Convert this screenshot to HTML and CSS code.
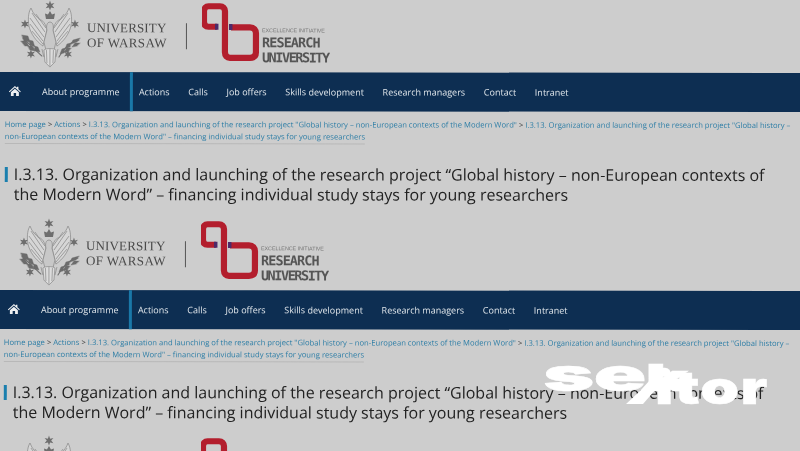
FILE: index.html
```html
<!DOCTYPE html>
<html lang="en">
<head>
<meta charset="utf-8">
<title>I.3.13. Organization and launching of the research project</title>
<link rel="stylesheet" href="styles.css">
</head>
<body>
<svg class="defs" aria-hidden="true">
  <symbol id="star" viewBox="0 0 10 10">
    <path d="M5 0.5 6 3.3 9 2.6 7 5 9 7.4 6 6.7 5 9.5 4 6.7 1 7.4 3 5 1 2.6 4 3.3Z"/>
  </symbol>
  <symbol id="eagle" viewBox="0 0 64 68">
    <g fill="#d6d6d6" stroke="#858585" stroke-width=".7">
      <path d="M11 8C8 13 8 20 9 26 11 34 16 41 23 46L27 30C26 24 22 19 20 20 17 17 13 14 11 8Z"/>
      <path d="M49 8C52 13 52 20 51 26 49 34 44 41 37 46L33 30C34 24 38 19 40 20 43 17 47 14 49 8Z"/>
      <path d="M12 13 25 32M10 18 24 37M10 24 23 41M12 31 23 44M16 14 26 28M48 13 35 32M50 18 36 37M50 24 37 41M48 31 37 44M44 14 34 28" fill="none" stroke="#8e8e8e" stroke-width=".8"/>
      <path d="M27 30C26 26 27 22 30 22 33 22 34 26 33 30L36 42 34 50 26 50 24 42Z" fill="#c8c8c8"/>
      <path d="M24 50C26 48 34 48 36 50L35 62 30 67 25 62Z" fill="#dcdcdc"/>
      <path d="M26.500 50 27 63M30 49V66M33.500 50 33 63M22 49 24 57M38 49 36 57" fill="none" stroke-width=".7"/>
    </g>
    <g fill="#6e6e6e">
      <use href="#star" x="24.500" y="0" width="11" height="11"/>
      <use href="#star" x="0" y="19" width="10" height="10"/>
      <use href="#star" x="50" y="19" width="10" height="10"/>
      <use href="#star" x="6" y="49" width="10" height="10"/>
      <use href="#star" x="43" y="49" width="10" height="10"/>
      <path d="M26 19 25 13.500 28 14.500 30 11 32 14.500 35 13.500 34 19Z"/>
    </g>
    <g fill="#6c6c6c" stroke="#6c6c6c" stroke-linecap="round">
      <path d="M3 38 22 56" fill="none" stroke-width="1"/>
      <path d="M59 40C50 42 44 48 39 57" fill="none" stroke-width="1"/>
      <path d="M2 35 8 36 10 42 4 41ZM1 41 6 41 9 46 5 46ZM9 40 13 41 15 47 10 45ZM8 46 12 46 15 51 10 50ZM15 46 18 47 20 52 15 51Z" stroke-width=".4"/>
      <path d="M60 38 53 40 51 44 57 42ZM60 43 55 43 52 47 57 46ZM51 43 47 44 45 49 50 47ZM51 48 47 48 44 52 48 52ZM45 48 42 49 40 54 44 53Z" stroke-width=".4"/>
    </g>
  </symbol>
  <symbol id="mark" viewBox="0 0 60 62">
    <path d="M15 26.500H6.500C3.500 26.500 2 24.500 2 21.500V11C2 8 4 6 6.500 6H18C21 6 23 8 23 11V52C23 55.500 25 57.500 28 57.500H48C52 57.500 54 55.500 54 52V33C54 29.500 52 27 48 27H29" fill="none" stroke="#b31e2d" stroke-width="6.200"/>
    <path d="M13 23.500h3.500v6H13zM27 23.800h3.500v6H27z" fill="#4d2a6a"/>
  </symbol>
</svg>

<main class="page">
  <section class="shot">
    <header class="brand">
      <svg class="eagle"><use href="#eagle"/></svg>
      <div class="uw"><span>UNIVERSITY</span><span class="uw-b">OF WARSAW</span></div>
      <i class="rule"></i>
      <svg class="mark"><use href="#mark"/></svg>
      <div class="idub"><small>EXCELLENCE INITIATIVE</small><b>RESEARCH</b><b>UNIVERSITY</b></div>
    </header>
    <nav class="nav">
      <svg class="home" viewBox="0 0 12 10"><path d="M6 0 8 1.800V.7h1.500v2.500L12 5.400l-.7.8L6 1.600.7 6.200 0 5.400ZM2 6.200 6 2.800l4 3.400V10H7.200V7H4.800v3H2Z"/></svg>
      <a class="item active">About programme</a>
      <a class="item">Actions</a>
      <a class="item">Calls</a>
      <a class="item">Job offers</a>
      <a class="item">Skills development</a>
      <a class="item">Research managers</a>
      <a class="item">Contact</a>
      <a class="item">Intranet</a>
    </nav>
    <p class="crumbs"><a>Home page</a> <em>&gt;</em> <a>Actions</a> <em>&gt;</em> <a>I.3.13. Organization and launching of the research project "Global history – non-European contexts of the Modern Word"</a> <em>&gt;</em> <a>I.3.13. Organization and launching of the research project "Global history – non-European contexts of the Modern Word" – financing individual study stays for young researchers</a></p>
    <h1 class="title">I.3.13. Organization and launching of the research project “Global history – non-European contexts of the Modern Word” – financing individual study stays for young researchers</h1>
  </section>

  <section class="shot">
    <header class="brand">
      <svg class="eagle"><use href="#eagle"/></svg>
      <div class="uw"><span>UNIVERSITY</span><span class="uw-b">OF WARSAW</span></div>
      <i class="rule"></i>
      <svg class="mark"><use href="#mark"/></svg>
      <div class="idub"><small>EXCELLENCE INITIATIVE</small><b>RESEARCH</b><b>UNIVERSITY</b></div>
    </header>
    <nav class="nav">
      <svg class="home" viewBox="0 0 12 10"><path d="M6 0 8 1.800V.7h1.500v2.500L12 5.400l-.7.8L6 1.600.7 6.200 0 5.400ZM2 6.200 6 2.800l4 3.400V10H7.200V7H4.800v3H2Z"/></svg>
      <a class="item active">About programme</a>
      <a class="item">Actions</a>
      <a class="item">Calls</a>
      <a class="item">Job offers</a>
      <a class="item">Skills development</a>
      <a class="item">Research managers</a>
      <a class="item">Contact</a>
      <a class="item">Intranet</a>
    </nav>
    <p class="crumbs"><a>Home page</a> <em>&gt;</em> <a>Actions</a> <em>&gt;</em> <a>I.3.13. Organization and launching of the research project "Global history – non-European contexts of the Modern Word"</a> <em>&gt;</em> <a>I.3.13. Organization and launching of the research project "Global history – non-European contexts of the Modern Word" – financing individual study stays for young researchers</a></p>
    <h1 class="title">I.3.13. Organization and launching of the research project “Global history – non-European contexts of the Modern Word” – financing individual study stays for young researchers</h1>
  </section>

  <section class="shot">
    <header class="brand">
      <svg class="eagle"><use href="#eagle"/></svg>
      <div class="uw"><span>UNIVERSITY</span><span class="uw-b">OF WARSAW</span></div>
      <i class="rule"></i>
      <svg class="mark"><use href="#mark"/></svg>
      <div class="idub"><small>EXCELLENCE INITIATIVE</small><b>RESEARCH</b><b>UNIVERSITY</b></div>
    </header>
  </section>
</main>

<div class="mask">
  <span class="wm wm-a">se<span class="wm-k">k</span></span>
  <span class="wm wm-b">itor</span>
  <svg class="wm-x" viewBox="0 0 40 24"><path d="M24 0H38L17 24H0L14 11Z"/></svg>
</div>
</body>
</html>
```

FILE: styles.css
```css
* { box-sizing: border-box; }

html, body {
  margin: 0;
  width: 800px;
  height: 451px;
  overflow: hidden;
  background: #cdcdcd;
}

.defs {
  position: absolute;
  width: 0;
  height: 0;
}

.page {
  width: 800px;
  height: 451px;
  overflow: hidden;
  filter: blur(.45px);
  font-family: "Open Sans", "Noto Sans", sans-serif;
}

.shot {
  width: 803px;
  height: 217.5px;
  transform: rotate(.07deg);
  transform-origin: 0 0;
}

.shot + .shot {
  margin-left: -1.4px;
}

.brand {
  height: 72px;
  display: flex;
  align-items: flex-start;
  padding-left: 20px;
}

.eagle {
  width: 64px;
  height: 68px;
  flex: none;
}

.uw {
  display: flex;
  flex-direction: column;
  margin: 20px 0 0 3px;
  width: 99px;
  font-family: "Liberation Serif", serif;
  font-size: 13px;
  line-height: 15px;
  letter-spacing: .15px;
  color: #4a4a4a;
}

.uw-b {
  letter-spacing: .4px;
}

.rule {
  width: 1px;
  height: 26px;
  margin-top: 23px;
  background: #555;
  flex: none;
}

.mark {
  width: 60px;
  height: 62px;
  margin: 0 0 0 14.500px;
  flex: none;
}

.idub {
  display: flex;
  flex-direction: column;
  margin: 26px 0 0 .5px;
  color: #555;
}

.idub small {
  font-family: "Liberation Sans", sans-serif;
  font-size: 5.4px;
  line-height: 9px;
  letter-spacing: -.05px;
  color: #777;
  white-space: nowrap;
}

.idub b {
  font-family: "DejaVu Sans Mono", monospace;
  font-size: 13.500px;
  line-height: 14.500px;
  letter-spacing: -.9px;
  white-space: nowrap;
}

.idub b + b {
  letter-spacing: -1.450px;
}

.nav {
  height: 39px;
  display: flex;
  align-items: center;
  padding-left: 9px;
  background: #0d2e52;
  color: #dfe5ea;
  font-size: 9px;
  white-space: nowrap;
}

.home {
  width: 12px;
  height: 10px;
  margin: -1px 11.500px 0 0;
  fill: #eef0f2;
  flex: none;
}

.item {
  height: 100%;
  display: flex;
  align-items: center;
  padding: 0 9.350px;
}

.active {
  padding-left: 9.600px;
  padding-right: 10px;
  border-right: 3px solid #1a78a8;
  margin-right: -3px;
}

.crumbs {
  width: 790px;
  margin: 8px 0 0 5px;
  padding-bottom: 2px;
  font-size: 7.660px;
  line-height: 11.500px;
  color: #2e7ea6;
  background: linear-gradient(#b8b8b8, #b8b8b8) left bottom / 360px 1px no-repeat;
}

.crumbs em {
  font-style: normal;
  color: #333;
}

.title {
  position: relative;
  width: 770px;
  margin: 19.500px 0 0 14px;
  font-size: 16px;
  font-weight: 400;
  line-height: 20.500px;
  color: #222;
}

.title::before {
  content: "";
  position: absolute;
  left: -9px;
  top: 3px;
  width: 3px;
  height: 15px;
  background: #1a7fae;
}

.mask {
  position: absolute;
  left: 0;
  top: 0;
  width: 800px;
  height: 451px;
  overflow: hidden;
  pointer-events: none;
}

.wm {
  position: absolute;
  font-family: Inter, "Liberation Sans", sans-serif;
  font-weight: 900;
  color: #fff;
  line-height: 1;
  transform-origin: 0 0;
  -webkit-text-stroke: .4px #fff;
  white-space: nowrap;
}

.wm-a {
  left: 543px;
  top: 351px;
  font-size: 46px;
  letter-spacing: -.5px;
  transform: scaleX(1.9);
}

.wm-k {
  font-size: 37px;
}

.wm-b {
  left: 655px;
  top: 364px;
  font-size: 46px;
  letter-spacing: 1px;
  transform: scaleX(1.35);
}

.wm-x {
  position: absolute;
  left: 626px;
  top: 380px;
  width: 40px;
  height: 24px;
  fill: #fff;
}
```
